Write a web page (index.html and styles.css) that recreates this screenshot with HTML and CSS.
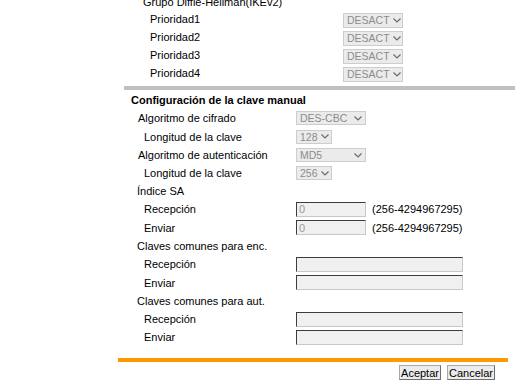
FILE: index.html
```html
<!DOCTYPE html>
<html lang="es">
<head>
  <meta charset="UTF-8" />
  <title>Configuración IPsec</title>
  <link rel="stylesheet" href="styles.css">
</head>
<body>
  <div class="page">

    <div class="row top-group">Grupo Diffie-Hellman(IKEv2)</div>

    <div class="row prio"><span class="label">Prioridad1</span><span class="sel w60">DESACT<svg class="chev" viewBox="0 0 8 5"><path d="M0.5 0.5 L4 4 L7.5 0.5" /></svg></span></div>
    <div class="row prio"><span class="label">Prioridad2</span><span class="sel w60">DESACT<svg class="chev" viewBox="0 0 8 5"><path d="M0.5 0.5 L4 4 L7.5 0.5" /></svg></span></div>
    <div class="row prio"><span class="label">Prioridad3</span><span class="sel w60">DESACT<svg class="chev" viewBox="0 0 8 5"><path d="M0.5 0.5 L4 4 L7.5 0.5" /></svg></span></div>
    <div class="row prio"><span class="label">Prioridad4</span><span class="sel w60">DESACT<svg class="chev" viewBox="0 0 8 5"><path d="M0.5 0.5 L4 4 L7.5 0.5" /></svg></span></div>

    <div class="rule-gray"></div>

    <div class="row title">Configuración de la clave manual</div>

    <div class="row"><span class="label l1">Algoritmo de cifrado</span><span class="sel w70">DES-CBC<svg class="chev" viewBox="0 0 8 5"><path d="M0.5 0.5 L4 4 L7.5 0.5" /></svg></span></div>
    <div class="row tall"><span class="label l2">Longitud de la clave</span><span class="sel w36">128<svg class="chev" viewBox="0 0 8 5"><path d="M0.5 0.5 L4 4 L7.5 0.5" /></svg></span></div>
    <div class="row"><span class="label l1">Algoritmo de autenticación</span><span class="sel w70">MD5<svg class="chev" viewBox="0 0 8 5"><path d="M0.5 0.5 L4 4 L7.5 0.5" /></svg></span></div>
    <div class="row"><span class="label l2">Longitud de la clave</span><span class="sel w36">256<svg class="chev" viewBox="0 0 8 5"><path d="M0.5 0.5 L4 4 L7.5 0.5" /></svg></span></div>

    <div class="row"><span class="label lh">Índice SA</span></div>
    <div class="row"><span class="label l2">Recepción</span><input class="field short" type="text" value="0" disabled><span class="range">(256-4294967295)</span></div>
    <div class="row tall"><span class="label l2">Enviar</span><input class="field short" type="text" value="0" disabled><span class="range">(256-4294967295)</span></div>

    <div class="row"><span class="label lh">Claves comunes para enc.</span></div>
    <div class="row"><span class="label l2">Recepción</span><input class="field long" type="text" disabled></div>
    <div class="row tall"><span class="label l2">Enviar</span><input class="field long" type="text" disabled></div>

    <div class="row"><span class="label lh">Claves comunes para aut.</span></div>
    <div class="row"><span class="label l2">Recepción</span><input class="field long" type="text" disabled></div>
    <div class="row"><span class="label l2">Enviar</span><input class="field long" type="text" disabled></div>

    <div class="rule-orange"></div>

    <div class="actions">
      <button type="button">Aceptar</button>
      <button type="button">Cancelar</button>
    </div>

  </div>
</body>
</html>
```

FILE: styles.css
```css
body {
  margin: 0;
  background: #fff;
  color: #000;
  font-family: "Liberation Sans", Arial, sans-serif;
  font-size: 11px;
  overflow: hidden;
}
.page {
  margin-top: -7px;
  padding-left: 118px;
  width: 399px;
}
.row {
  display: flex;
  align-items: center;
  height: 18px;
  white-space: nowrap;
}
.row.tall {
  height: 19px;
}
.top-group {
  height: 17px;
  padding-left: 25px;
}
.prio .label {
  width: 225px;
  padding-left: 32px;
}
.label {
  box-sizing: border-box;
  width: 178px;
}
.l1 {
  padding-left: 20px;
}
.l2 {
  padding-left: 26px;
}
.lh {
  padding-left: 19px;
}
.title {
  padding-left: 13px;
  font-weight: bold;
}
.sel {
  box-sizing: border-box;
  display: flex;
  align-items: center;
  justify-content: space-between;
  height: 14px;
  padding: 0 3px;
  background: #ebebeb;
  border: 1px solid #cdcdcd;
  color: #8c8c8c;
  font-size: 10.5px;
}
.prio .sel {
  height: 15px;
  margin-top: 2px;
}
.w60 { width: 60px; }
.w70 { width: 70px; }
.w36 { width: 36px; }
.chev {
  flex: none;
  width: 8px;
  height: 5px;
  margin-left: 3px;
  fill: none;
  stroke: #6a6a6a;
  stroke-width: 1.2;
}
.field {
  box-sizing: border-box;
  height: 15px;
  margin: 0;
  padding: 0 2px;
  background: #f0f0f0;
  border: 1px solid #c8c8c8;
  border-top-color: #3c3c3c;
  border-left-color: #3c3c3c;
  color: #9a9a9a;
  font-family: inherit;
  font-size: 11px;
}
.field.short { width: 70px; }
.field.long { width: 167px; }
.range {
  margin-left: 6px;
}
.rule-gray {
  height: 4px;
  margin: 4px 2px 1px 6px;
  background: #c0c0c0;
}
.rule-orange {
  height: 4px;
  margin: 12px 9px 0 0;
  background: #ff9900;
}
.actions {
  display: flex;
  justify-content: flex-end;
  gap: 6px;
  margin-top: 3px;
  padding-right: 22px;
}
button {
  height: 15px;
  padding: 0 1px;
  background: #ececec;
  border: 1px solid #a9a9a9;
  border-right-color: #6f6f6f;
  border-bottom-color: #6f6f6f;
  font-family: inherit;
  font-size: 11px;
  color: #000;
  line-height: 12px;
}
```
